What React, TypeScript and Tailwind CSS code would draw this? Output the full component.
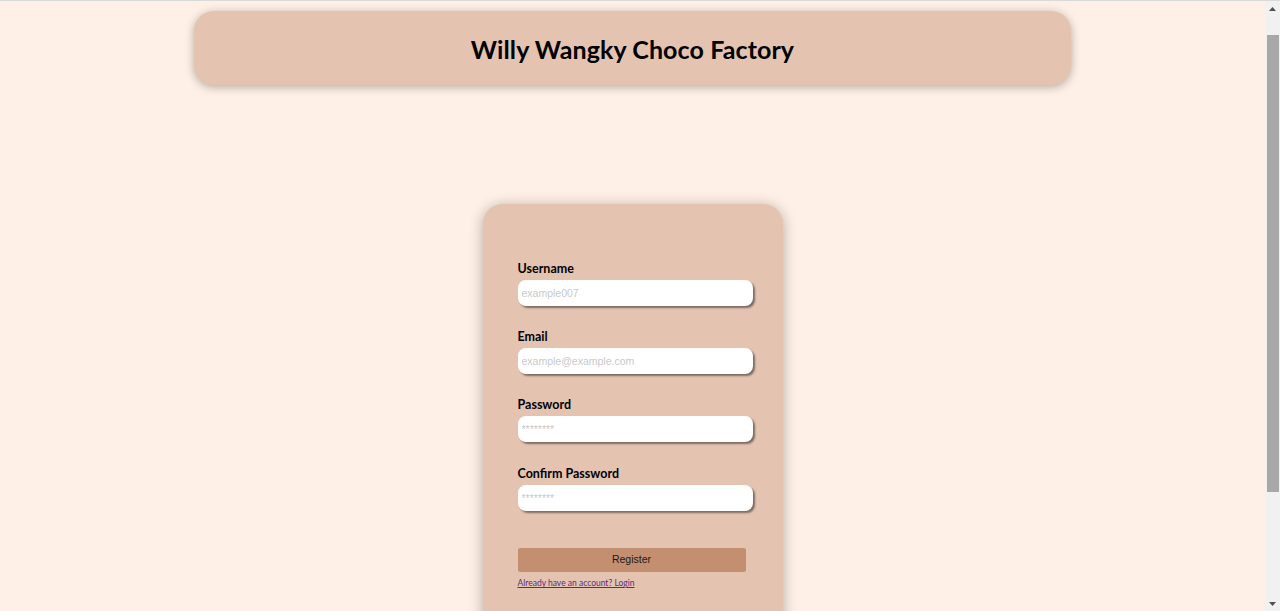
import React from "react";

const fields = [
  { label: "Username", type: "text", placeholder: "example007" },
  { label: "Email", type: "email", placeholder: "example@example.com" },
  { label: "Password", type: "password", placeholder: "********" },
  { label: "Confirm Password", type: "password", placeholder: "********" },
];

function FakeScrollbar() {
  return (
    <div className="fixed right-0 top-[1px] bottom-0 flex w-[15px] flex-col items-center bg-[#f1f1f1]">
      <div className="flex h-[15px] w-full items-center justify-center">
        <svg width="7" height="4" viewBox="0 0 7 4">
          <polygon points="0,4 3.5,0 7,4" fill="#505050" />
        </svg>
      </div>
      <div className="h-[19px]" />
      <div className="h-[457px] w-[12px] bg-[#a8a8a8]" />
      <div className="flex-1" />
      <div className="flex h-[15px] w-full items-center justify-center">
        <svg width="7" height="4" viewBox="0 0 7 4">
          <polygon points="0,0 7,0 3.5,4" fill="#505050" />
        </svg>
      </div>
    </div>
  );
}

export default function App() {
  return (
    <div className="min-h-screen bg-[#fef0e6] border-t border-[#dadada] font-['Lato','Noto_Sans',sans-serif]">
      <div className="w-[1265px] pb-[40px]">
        <header className="mx-auto mt-[10px] flex h-[74px] w-[877px] items-center justify-center rounded-[20px] bg-[#e4c4b1] pt-[3px] shadow-[0_2px_10px_rgba(0,0,0,0.3)]">
          <h1 className="text-[25px] font-bold text-black tracking-[0.1px]">Willy Wangky Choco Factory</h1>
        </header>
        <main className="mt-[119px] flex justify-center">
          <form className="w-[300px] rounded-[20px] bg-[#e4c4b1] pl-[35px] pr-[30px] pt-[57px] pb-[130px] shadow-[0_2px_14px_rgba(0,0,0,0.3)]">
            <div className="flex flex-col gap-[23px]">
              {fields.map((f, i) => (
                <div key={f.label} className={`flex flex-col ${i === 3 ? "mt-[1px]" : ""}`}>
                  <label className="block h-[16px] text-[12.5px] font-bold leading-[16px] text-black">{f.label}</label>
                  <input
                    type={f.type}
                    placeholder={f.placeholder}
                    className="mt-[3px] h-[26px] w-[235px] rounded-[8px] bg-white px-[4px] font-['Liberation_Sans',Arial,sans-serif] text-[10.5px] text-black outline-none shadow-[2px_2px_2px_rgba(0,0,0,0.45)] placeholder:text-[#c9c9c9]"
                  />
                </div>
              ))}
            </div>
            <button
              type="button"
              className="mt-[37px] block h-[24px] w-[228px] rounded-[2px] bg-[#c48e71] font-['Liberation_Sans',Arial,sans-serif] text-[10.5px] text-[#1a1a1a]"
            >
              Register
            </button>
            <a href="#" className="mt-[5px] block text-[8.5px] leading-[12px] text-[#5b2a86] underline">
              Already have an account? Login
            </a>
          </form>
        </main>
      </div>
      <FakeScrollbar />
    </div>
  );
}
